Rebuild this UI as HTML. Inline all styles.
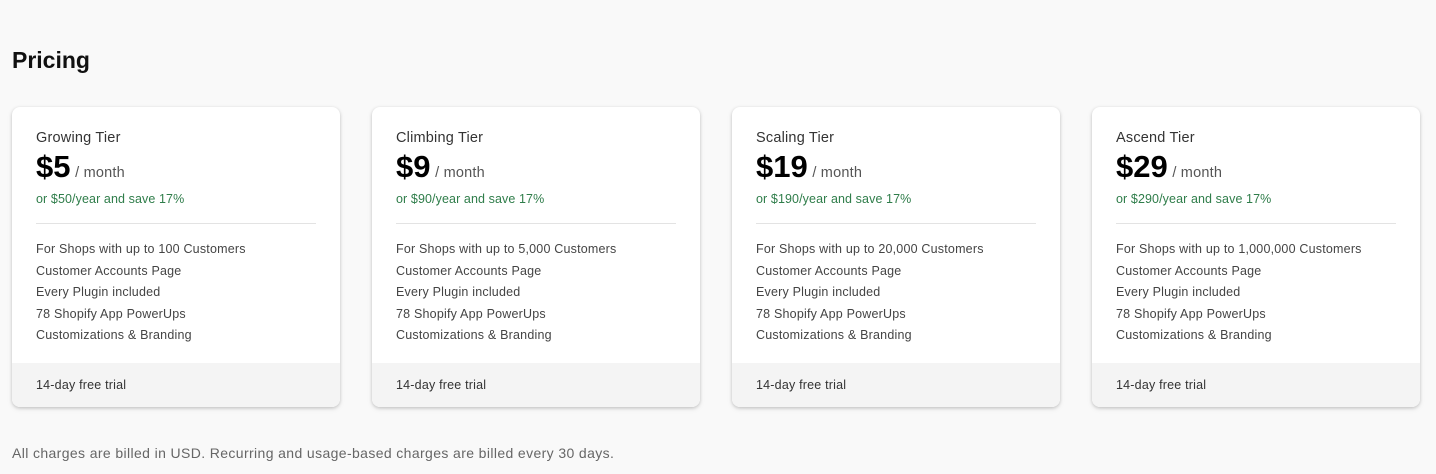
<!DOCTYPE html>
<html><head><style>
*{margin:0;padding:0;box-sizing:border-box}
body{width:1436px;height:474px;background:#f9f9f9;font-family:"Liberation Sans",sans-serif;position:relative;overflow:hidden}
h1{position:absolute;left:12px;top:47px;font-size:23px;font-weight:700;color:#111}
.card{position:absolute;top:107px;width:328px;height:300px;background:#fff;border-radius:8px;box-shadow:0 1px 3px rgba(0,0,0,.18),0 2px 6px rgba(0,0,0,.08);overflow:hidden}
.t{position:absolute;left:24px;top:23px;font-size:14.5px;color:#333;letter-spacing:.2px}
.p{position:absolute;left:24px;top:42px;font-size:31px;font-weight:700;color:#000}
.p span{font-size:14.5px;font-weight:400;color:#555;margin-left:-4px;letter-spacing:.2px}
.g{position:absolute;left:24px;top:85px;font-size:12.5px;color:#2f7d4a;letter-spacing:.1px}
.d{position:absolute;left:24px;right:24px;top:116px;border-top:1px solid #e3e3e3}
ul{position:absolute;left:24px;top:132px;list-style:none;font-size:12.5px;color:#444;line-height:21.5px;letter-spacing:.2px}
.f{position:absolute;left:0;right:0;bottom:0;height:44px;background:#f4f4f4;font-size:12.5px;color:#333;padding:15px 24px;letter-spacing:.2px}
.b{position:absolute;left:12px;top:445px;font-size:14px;color:#666;letter-spacing:.38px}
</style></head><body>
<h1>Pricing</h1>
<div class="card" style="left:12px"><div class="t">Growing Tier</div><div class="p">$5 <span>/ month</span></div><div class="g">or $50/year and save 17%</div><div class="d"></div><ul><li>For Shops with up to 100 Customers</li><li>Customer Accounts Page</li><li>Every Plugin included</li><li>78 Shopify App PowerUps</li><li>Customizations &amp; Branding</li></ul><div class="f">14-day free trial</div></div>
<div class="card" style="left:372px"><div class="t">Climbing Tier</div><div class="p">$9 <span>/ month</span></div><div class="g">or $90/year and save 17%</div><div class="d"></div><ul><li>For Shops with up to 5,000 Customers</li><li>Customer Accounts Page</li><li>Every Plugin included</li><li>78 Shopify App PowerUps</li><li>Customizations &amp; Branding</li></ul><div class="f">14-day free trial</div></div>
<div class="card" style="left:732px"><div class="t">Scaling Tier</div><div class="p">$19 <span>/ month</span></div><div class="g">or $190/year and save 17%</div><div class="d"></div><ul><li>For Shops with up to 20,000 Customers</li><li>Customer Accounts Page</li><li>Every Plugin included</li><li>78 Shopify App PowerUps</li><li>Customizations &amp; Branding</li></ul><div class="f">14-day free trial</div></div>
<div class="card" style="left:1092px"><div class="t">Ascend Tier</div><div class="p">$29 <span>/ month</span></div><div class="g">or $290/year and save 17%</div><div class="d"></div><ul><li>For Shops with up to 1,000,000 Customers</li><li>Customer Accounts Page</li><li>Every Plugin included</li><li>78 Shopify App PowerUps</li><li>Customizations &amp; Branding</li></ul><div class="f">14-day free trial</div></div>
<div class="b">All charges are billed in USD. Recurring and usage-based charges are billed every 30 days.</div>
</body></html>
